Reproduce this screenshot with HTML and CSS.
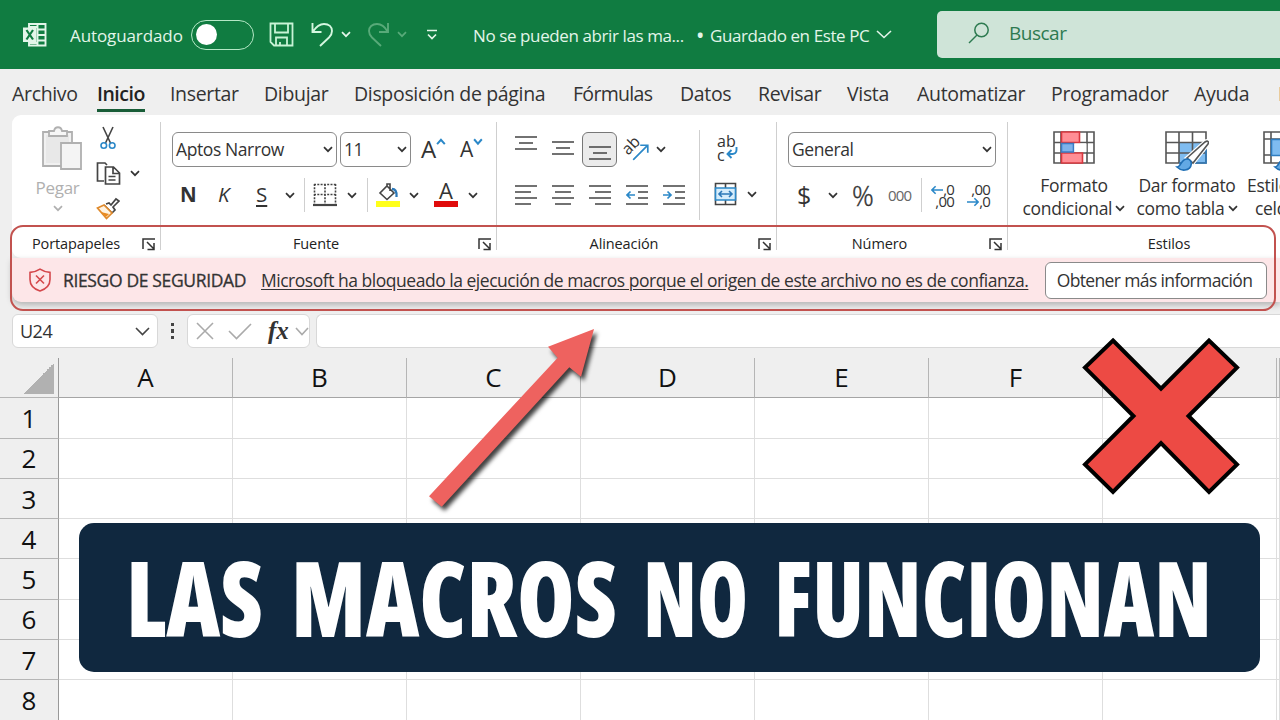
FILE: index.html
```html
<!DOCTYPE html>
<html lang="es">
<head>
  <meta charset="utf-8">
  <title>Las macros no funcionan</title>
  <link rel="stylesheet" href="styles.css">
</head>
<body>

  <!-- shared icons -->
  <svg class="defs">
    <symbol id="chev" viewBox="0 0 10 7"><path d="M1 1.2l4 4 4-4" fill="none" stroke="currentColor" stroke-width="1.7"/></symbol>
    <symbol id="launch" viewBox="0 0 14 13"><path d="M1 11V1h12M5 4l6.500 6.500M12 5v6.500H5.500" fill="none" stroke="#333" stroke-width="1.500"/></symbol>
  </svg>

  <header class="titlebar">
    <svg width="25" height="24" viewBox="0 0 25 24" fill="none" stroke="#e3f5e9" stroke-width="1.900"><path d="M6 5V1h16.500v21.500H6V19M14.500 1v22M14 6.500h9M14 12h9M14 17.500h9M6 4h8M6 20h8"/><path d="M0 4.500h13.500v14.500H0z" fill="#e3f5e9" stroke="none"/><path d="M3.500 7l6.500 9.500M10 7L3.500 16.500" stroke="#107c41" stroke-width="2.200"/></svg>
    <span class="autosave">Autoguardado</span>
    <span class="toggle"></span>
    <svg width="25" height="25" viewBox="0 0 25 25" fill="none" stroke="#c8f3d6" stroke-width="1.800"><path d="M1.500 1.500h22v22H5l-3.500-3.500zM6 1.500v9h13v-9M7 23.500v-8h11v8M11 20v3"/></svg>
    <svg width="23" height="25" viewBox="0 0 23 25" fill="none" stroke="#d5f7e0" stroke-width="1.900"><path d="M1.500 1v9h9M2 9.500C5 5 9 2 13 2c5 0 8 3 8 7 0 3-1 4.500-3 6.500L9 24"/></svg>
    <svg class="chev"><use href="#chev"/></svg>
    <svg class="dim" width="23" height="25" viewBox="0 0 23 25" fill="none" stroke="#58aa79" stroke-width="1.900"><path d="M21 1v9h-9M20.500 9.500C18 5 14 2 10 2 5 2 2 5 2 9c0 3 1 4.500 3 6.500L14 24"/></svg>
    <svg class="chev dim"><use href="#chev"/></svg>
    <svg width="12" height="12" viewBox="0 0 12 12" fill="none" stroke="#e3f5e9" stroke-width="1.700"><path d="M1 1.500h10M2 5.500l4 4 4-4"/></svg>
    <span class="filename">No se pueden abrir las ma...</span>
    <span class="saved"><b>•</b>Guardado en Este PC</span>
    <svg width="16" height="9" viewBox="0 0 16 9" fill="none" stroke="#e3f5e9" stroke-width="1.600"><path d="M1 1l7 6.500L15 1"/></svg>
    <div class="search">
      <svg width="22" height="22" viewBox="0 0 22 22" fill="none" stroke="#2d7a50" stroke-width="1.500"><circle cx="13.500" cy="8" r="6.700"/><path d="M9 13l-8 8"/></svg>
      <span>Buscar</span>
    </div>
  </header>

  <nav class="tabs">
    <span>Archivo</span>
    <span class="active">Inicio</span>
    <span>Insertar</span>
    <span>Dibujar</span>
    <span>Disposición de página</span>
    <span class="tight">Fórmulas</span>
    <span>Datos</span>
    <span>Revisar</span>
    <span>Vista</span>
    <span>Automatizar</span>
    <span>Programador</span>
    <span>Ayuda</span>
    <span>P</span>
  </nav>

  <main class="ribbon">
    <section class="group clipboard">
      <div class="clip-body">
        <div class="paste">
          <svg width="41" height="45" viewBox="0 0 41 45" fill="#f1f1f1" stroke="#b0b0b0" stroke-width="1.800"><path d="M2 6h29v34H2z"/><path d="M5 9h23v28H5z" stroke="none" fill="#e8e8e8"/><path d="M8 10V5h5c1-5 7-5 8 0h5v5z" fill="#f6f6f6"/><path d="M20 17h20v26H20z" fill="#f4f4f4"/></svg>
          <span>Pegar</span>
          <svg class="chev"><use href="#chev"/></svg>
        </div>
        <div class="clip-tools">
          <svg width="16" height="24" viewBox="0 0 16 24" fill="none" stroke-width="1.600"><path d="M3 1l7.500 16M13 1L5.500 17" stroke="#444"/><circle cx="3.800" cy="19.500" r="2.800" stroke="#2b88c8"/><circle cx="12.200" cy="19.500" r="2.800" stroke="#2b88c8"/></svg>
          <div class="copy">
            <svg width="25" height="25" viewBox="0 0 25 25" fill="none" stroke="#444" stroke-width="1.700"><path d="M8 20H1.500V2H9l2 2M9.500 6h8l6 6v11h-14zM17 6v6.500h6M12.500 15.500h7M12.500 19h7"/></svg>
            <svg class="chev"><use href="#chev"/></svg>
          </div>
          <svg width="24" height="23" viewBox="0 0 24 23" fill="none" stroke-width="1.700"><path d="M8 8l8 8M10 7l3-1 2 2 5-6 3 2-6 6 2 3-3 3" stroke="#444"/><path d="M8 8L1.500 11l9 10.500L16 16z" stroke="#e08a2c" fill="#fff3e2"/><path d="M5 15l8 2-3 3z" fill="#e98a20"/></svg>
        </div>
      </div>
      <div class="label"><span>Portapapeles</span><svg class="launch"><use href="#launch"/></svg></div>
    </section>

    <section class="group font">
      <div class="row row-top">
        <div class="select">Aptos Narrow<svg class="chev"><use href="#chev"/></svg></div>
        <div class="select">11<svg class="chev"><use href="#chev"/></svg></div>
        <span class="grow">A<svg class="hint" viewBox="0 0 10 7"><path d="M1 5.500l3.500-4 3.500 4" fill="none" stroke="#2b88c8" stroke-width="1.800"/></svg></span>
        <span class="grow small">A<svg class="hint" viewBox="0 0 10 7"><path d="M1 1l3.500 4L8 1" fill="none" stroke="#2b88c8" stroke-width="1.800"/></svg></span>
      </div>
      <div class="row row-bottom">
        <b>N</b>
        <i>K</i>
        <u>S</u>
        <svg class="chev"><use href="#chev"/></svg>
        <span class="sep"></span>
        <svg width="24" height="24" viewBox="0 0 24 24" stroke="#444" stroke-width="1.600"><path d="M1.500 1v20M12 1v20M22.500 1v20M1 1.500h22M1 11.500h22" stroke-dasharray="2 1.300"/><path d="M0 22h24" stroke-width="2.200"/></svg>
        <svg class="chev"><use href="#chev"/></svg>
        <span class="sep"></span>
        <svg width="24" height="24" viewBox="0 0 24 24" fill="none" stroke="#444" stroke-width="1.600"><path d="M11 3l7 7-7 6.500L4 10zM11 3V1h3v7"/><path d="M16 6c3 0 5 2 4.500 8" stroke="#2b78b8" stroke-width="2.300"/><path d="M0 21h24" stroke="#ffff1a" stroke-width="6"/></svg>
        <svg class="chev"><use href="#chev"/></svg>
        <span class="fontcolor">A</span>
        <svg class="chev"><use href="#chev"/></svg>
      </div>
      <div class="label"><span>Fuente</span><svg class="launch"><use href="#launch"/></svg></div>
    </section>

    <section class="group align">
      <div class="align-body">
        <div>
          <div class="row row-top">
            <svg class="ico up" viewBox="0 0 22 22"><path d="M0 3h22M4 9h14M0 15h22"/></svg>
            <svg class="ico" viewBox="0 0 22 22"><path d="M0 4h22M4 10h14M0 16h22"/></svg>
            <span class="pressed"><svg class="ico" viewBox="0 0 22 22"><path d="M0 9h22M4 15h14M0 21h22"/></svg></span>
            <span class="orient">ab<svg viewBox="0 0 18 18"><path d="M1 17L16 2M8.500 1.500H16.500V9.500" fill="none" stroke="#2b88c8" stroke-width="1.800"/></svg></span>
            <svg class="chev"><use href="#chev"/></svg>
          </div>
          <div class="row row-bottom">
            <svg class="ico" viewBox="0 0 22 22"><path d="M0 2h22M0 8h16M0 14h22M0 20h16"/></svg>
            <svg class="ico" viewBox="0 0 22 22"><path d="M0 2h22M3 8h16M0 14h22M3 20h16"/></svg>
            <svg class="ico" viewBox="0 0 22 22"><path d="M0 2h22M6 8h16M0 14h22M6 20h16"/></svg>
            <svg class="ico" viewBox="0 0 22 22"><path d="M0 2h22M12 8h10M12 14h10M0 20h22"/><path class="blue" d="M9 11H1M4.500 7.500L1 11l3.500 3.500"/></svg>
            <svg class="ico" viewBox="0 0 22 22"><path d="M0 2h22M12 8h10M12 14h10M0 20h22"/><path class="blue" d="M0 11h8M4.500 7.500L8 11l-3.500 3.500"/></svg>
          </div>
        </div>
        <div class="wrap-tools">
          <div class="wraptext"><span>ab</span><span>c</span><svg viewBox="0 0 12 12"><path d="M10.500 0v3c0 3-2 4-4 4H1.500M5.500 3l-4 4 4 4" fill="none" stroke="#2b88c8" stroke-width="1.900"/></svg></div>
          <div class="merge">
            <svg width="24" height="24" viewBox="0 0 24 24" fill="none" stroke="#444" stroke-width="1.600"><path d="M1.500 1.500h20v21h-20zM11.500 1v5M11.500 18v5"/><path d="M1.500 6h20v12h-20z" fill="#d6edfb" stroke="#2b88c8"/><path d="M5 12h13M8 9l-3 3 3 3M15 9l3 3-3 3" stroke="#2b78b8"/></svg>
            <svg class="chev"><use href="#chev"/></svg>
          </div>
        </div>
      </div>
      <div class="label"><span>Alineación</span><svg class="launch"><use href="#launch"/></svg></div>
    </section>

    <section class="group number">
      <div class="row row-top">
        <div class="select">General<svg class="chev"><use href="#chev"/></svg></div>
      </div>
      <div class="row row-bottom">
        <span class="dollar">$</span>
        <svg class="chev"><use href="#chev"/></svg>
        <span class="percent">%</span>
        <span class="thousands">000</span>
        <span class="sep"></span>
        <div class="decimals"><span><svg viewBox="0 0 13 10"><path d="M13 5H1M5 1L1 5l4 4"/></svg>,0</span><span>,00</span></div>
        <div class="decimals"><span>,00</span><span><svg viewBox="0 0 13 10"><path d="M0 5h12M8 1l4 4-4 4"/></svg>,0</span></div>
      </div>
      <div class="label"><span>Número</span><svg class="launch"><use href="#launch"/></svg></div>
    </section>

    <section class="group styles">
      <div class="styles-body">
        <div class="big">
          <svg width="42" height="40" viewBox="0 0 42 40" fill="none" stroke="#555" stroke-width="1.600"><path d="M1 1h40v31H1zM8 1v31M34 1v31M1 11.500h40M1 22h40"/><path d="M8.500 1h18v10.500h-18zM8.500 22h21v10h-21z" fill="#ff8e95" stroke="#d9383f"/><path d="M8.500 12.500h12v8.500h-12z" fill="#7fb2ea" stroke="#3b7cc4"/><path d="M21.500 12.500h12v8.500h-12z" fill="#fff" stroke="none"/></svg>
          <span>Formato</span>
          <span>condicional <svg class="chev"><use href="#chev"/></svg></span>
        </div>
        <div class="big table">
          <svg width="44" height="40" viewBox="0 0 44 40" fill="none" stroke="#555" stroke-width="1.600"><path d="M14 11h27v21H14z" fill="#7fbcf0" stroke="none"/><path d="M1 1h40v31H1zM14 1v31M27.500 1v31M1 11.500h40M1 22h40"/><path d="M14 32h27V11.500" stroke="#2f7dc0"/><path d="M22 27L40 11c3-2 4 0 3 2L28 32z" fill="#fff" stroke="#fff" stroke-width="4"/><path d="M22 27L40 11c3-2 4 0 3 2L28 32z" fill="#fff"/><path d="M12 36c4 0 4-8 10-8s6 10-2 11c-3 .500-6-1-8-3z" fill="#62a9e4" stroke="#1f6fb5"/></svg>
          <span>Dar formato</span>
          <span>como tabla <svg class="chev"><use href="#chev"/></svg></span>
        </div>
        <div class="big cells">
          <svg width="44" height="40" viewBox="0 0 44 40" fill="none" stroke="#555" stroke-width="1.600"><path d="M1 1h40v31H1zM8 1v31M1 8h40M1 24h40"/><path d="M8.500 8.500h28v16h-28z" fill="#7fbcf0" stroke="#2f7dc0"/><path d="M12 36c4 0 4-8 10-8s6 10-2 11c-3 .500-6-1-8-3z" fill="#62a9e4" stroke="#1f6fb5"/></svg>
          <span>Estilos de</span>
          <span>celda</span>
        </div>
      </div>
      <div class="label"><span>Estilos</span></div>
    </section>
  </main>

  <div class="warning">
    <svg width="22" height="24" viewBox="0 0 22 24" fill="none" stroke="#d4484c" stroke-width="1.600"><path d="M11 1.200c3 2 6 3 10 3.200v7c0 6-4 9.500-10 11.500C5 21 1 17.500 1 11.400v-7c4-.200 7-1.200 10-3.200zM7 7.500l8 8M15 7.500l-8 8"/></svg>
    <strong>RIESGO DE SEGURIDAD</strong>
    <u>Microsoft ha bloqueado la ejecución de macros porque el origen de este archivo no es de confianza.</u>
    <button>Obtener más información</button>
  </div>

  <div class="formulabar">
    <div class="namebox">U24<svg width="15" height="9" viewBox="0 0 15 9"><path d="M1 1l6.500 6.500L14 1" fill="none" stroke="#444" stroke-width="1.600"/></svg></div>
    <span class="dots"><i></i><i></i><i></i></span>
    <div class="fx">
      <svg width="18" height="18" viewBox="0 0 18 18"><path d="M1 1l16 16M17 1L1 17"/></svg>
      <svg width="24" height="17" viewBox="0 0 24 17"><path d="M1 8l7.500 7.500L23 1"/></svg>
      <em>fx</em>
      <svg width="14" height="9" viewBox="0 0 14 9"><path d="M1 1l6 6.500L13 1"/></svg>
    </div>
    <div class="formula"></div>
  </div>

  <table class="sheet">
    <tr class="cols"><th class="corner"></th><th>A</th><th>B</th><th>C</th><th>D</th><th>E</th><th>F</th><th></th><th></th></tr>
    <tr><th>1</th><td></td><td></td><td></td><td></td><td></td><td></td><td></td><td></td></tr>
    <tr><th>2</th><td></td><td></td><td></td><td></td><td></td><td></td><td></td><td></td></tr>
    <tr><th>3</th><td></td><td></td><td></td><td></td><td></td><td></td><td></td><td></td></tr>
    <tr><th>4</th><td></td><td></td><td></td><td></td><td></td><td></td><td></td><td></td></tr>
    <tr><th>5</th><td></td><td></td><td></td><td></td><td></td><td></td><td></td><td></td></tr>
    <tr><th>6</th><td></td><td></td><td></td><td></td><td></td><td></td><td></td><td></td></tr>
    <tr><th>7</th><td></td><td></td><td></td><td></td><td></td><td></td><td></td><td></td></tr>
    <tr><th>8</th><td></td><td></td><td></td><td></td><td></td><td></td><td></td><td></td></tr>
  </table>

  <!-- annotations over the sheet -->
  <div class="frame"></div>
  <svg class="marks" viewBox="0 0 1280 720">
    <polygon class="arrow" points="594,329 548,346.700 557.700,357.700 429,496.300 441.700,506.700 569.300,367.300 581,376.700"/>
    <polygon class="cross" points="1113,340.500 1161,388.600 1209,340.500 1237,367.600 1188.500,416 1237,464.400 1209,492 1161,443.200 1113,492 1085,464.400 1133.500,416 1085,367.600"/>
  </svg>
  <div class="banner">
    <svg width="1181" height="149">
      <text x="47" y="114" textLength="137" lengthAdjust="spacingAndGlyphs">LAS</text>
      <text x="212" y="114" textLength="326" lengthAdjust="spacingAndGlyphs">MACROS</text>
      <text x="564" y="114" textLength="105" lengthAdjust="spacingAndGlyphs">NO</text>
      <text x="695" y="114" textLength="438" lengthAdjust="spacingAndGlyphs">FUNCIONAN</text>
    </svg>
  </div>

</body>
</html>
```
FILE: styles.css
```css
* {
  box-sizing: border-box;
}

html {
  overflow: hidden;
}

body {
  margin: 0;
  width: 1280px;
  height: 720px;
  overflow: hidden;
  position: relative;
  background: #efefef;
  color: #333;
  font-family: "Open Sans", "Noto Sans", sans-serif;
  font-size: 17px;
  white-space: nowrap;
}

svg {
  display: block;
  flex: none;
}

.defs {
  display: none;
}

.chev {
  width: 10px;
  height: 7px;
}

/* title bar */
.titlebar {
  height: 69px;
  background: #107c41;
  color: #e3f5e9;
  display: grid;
  grid-template-columns: 47px 121px 78px 42px 30px 26px 30px 29px 47px 226px 177px 61px 1fr;
  align-items: center;
  padding-left: 23px;
  font-size: 17px;
}

.titlebar .dim {
  color: #58aa79;
}

.autosave {
  letter-spacing: -0.1px;
}

.toggle {
  width: 63px;
  height: 30px;
  border: 1.5px solid #b5e8c6;
  border-radius: 15px;
}

.toggle::before {
  content: "";
  display: block;
  width: 21px;
  height: 21px;
  margin: 3px 4px;
  border-radius: 50%;
  background: #fff;
}

.filename, .saved {
  letter-spacing: -0.4px;
}

.autosave, .filename, .saved {
  padding-top: 1px;
}

.saved b {
  display: inline-block;
  width: 13px;
  margin-left: -2px;
}

.search {
  height: 47px;
  display: flex;
  align-items: center;
  gap: 19px;
  padding-left: 31px;
  padding-bottom: 3px;
  background: #cfe4d8;
  border-radius: 5px 0 0 5px;
  color: #2d7a50;
  font-size: 19px;
  letter-spacing: -0.5px;
}

/* ribbon tabs */
.tabs {
  height: 46px;
  display: grid;
  grid-template-columns: 85px 73px 94px 90px 219px 107px 78px 89px 70px 134px 143px 84px 4px;
  padding: 11px 0 0 12px;
  justify-items: start;
  font-size: 19.5px;
  line-height: 28px;
  letter-spacing: -0.33px;
}

.tabs .active {
  height: 32px;
  font-weight: 600;
  letter-spacing: -0.5px;
  color: #222;
  border-bottom: 3px solid #185c37;
}

.tabs .tight {
  letter-spacing: -0.7px;
}

/* ribbon */
.ribbon {
  height: 143px;
  margin-left: 12px;
  padding-top: 7px;
  display: grid;
  grid-template-columns: 149px 336px 280px 231px 1fr;
  background: #fff;
  border-radius: 9px 0 0 9px;
}

.group {
  height: 128px;
  padding-top: 6px;
  border-right: 1px solid #cfcfcf;
}

.group.styles {
  min-width: 0;
  border-right: none;
}

.row {
  display: grid;
  align-items: center;
  justify-items: start;
}

.row-top {
  height: 42px;
}

.row-bottom {
  height: 50px;
}

.label {
  height: 20px;
  margin-top: 14px;
  display: flex;
  align-items: center;
  font-size: 14.5px;
  line-height: 20px;
  letter-spacing: -0.1px;
  color: #222;
}

.label span {
  flex: 1;
  padding-right: 7px;
  text-align: center;
}

.launch {
  width: 14px;
  height: 13px;
  margin-right: 4px;
}

.select {
  width: 100%;
  height: 35px;
  padding: 0 3px 0 3px;
  display: flex;
  align-items: center;
  justify-content: space-between;
  border: 1.5px solid #8a8a8a;
  border-radius: 6px;
  font-size: 17.5px;
  letter-spacing: -0.4px;
}

.sep {
  width: 1px;
  height: 34px;
  background: #cfcfcf;
}

.clip-body {
  height: 92px;
  display: grid;
  grid-template-columns: 60px 1fr;
  padding-left: 24px;
}

.paste {
  width: 43px;
  display: flex;
  flex-direction: column;
  align-items: center;
  color: #b0b0b0;
  line-height: 33px;
  letter-spacing: -0.3px;
}

.paste > svg:first-child {
  margin: -2px 0 0 7px;
}

.paste .chev {
  margin-top: 1px;
}

.clip-tools {
  display: flex;
  flex-direction: column;
  justify-content: space-between;
  height: 94px;
  margin-top: -2px;
}

.clip-tools > svg:first-child {
  margin-left: 4px;
}

.copy {
  display: flex;
  align-items: center;
  gap: 9px;
}

.clipboard .label span {
  padding: 0;
  margin-left: -2px;
}

.font .row {
  padding-left: 11px;
}

.font .row-top {
  grid-template-columns: 165px 71px 38px 30px;
  column-gap: 3px;
}

.grow {
  padding-left: 7px;
  display: flex;
  font-size: 24px;
  line-height: 28px;
}

.grow.small {
  padding-left: 5px;
  font-size: 21px;
}

.hint {
  width: 11px;
  height: 8px;
  margin-top: 3px;
}

.font .row-bottom {
  grid-template-columns: 38px 38px 29px 19px 9px 34px 20px 9px 33px 25px 34px 20px;
  padding-left: 19px;
  font-size: 20.5px;
}

.font b, .font i, .font u {
  position: relative;
  top: -1px;
}

.font u {
  text-decoration-thickness: 1.5px;
  text-underline-offset: 3px;
}

.fontcolor {
  width: 24px;
  height: 24px;
  border-bottom: 6px solid #e00b0b;
  font-size: 22px;
  line-height: 15px;
  text-align: center;
}

.align-body {
  height: 92px;
  display: grid;
  grid-template-columns: 202px 1fr;
}

.align .row {
  grid-template-columns: 37px 37px 37px 37px 20px;
  padding-left: 18px;
}

.align .row-top {
  grid-template-columns: 37px 30px 43px 31px 20px;
}

.ico {
  width: 22px;
  height: 22px;
  fill: none;
  stroke: #444;
  stroke-width: 1.7;
}

.ico.up {
  margin-top: -8px;
}

.ico .blue {
  stroke: #2b88c8;
}

.pressed {
  width: 35px;
  height: 35px;
  padding: 5px 0 0 5.5px;
  border: 1.5px solid #777;
  border-radius: 6px;
  background: #ebebeb;
}

.orient {
  position: relative;
  font-size: 16px;
  line-height: 18px;
  transform: translate(-4px, -4px) rotate(-45deg);
}

.orient svg {
  position: absolute;
  left: 3px;
  top: 13px;
  width: 17px;
  height: 17px;
  transform: rotate(45deg);
}

.wrap-tools {
  height: 90px;
  margin-top: 2px;
  padding: 4px 0 0 14px;
  border-left: 1px solid #cfcfcf;
}

.wraptext {
  width: 24px;
  height: 30px;
  margin-left: 3px;
  position: relative;
  font-size: 16px;
  line-height: 14px;
}

.wraptext span {
  display: block;
}

.wraptext svg {
  position: absolute;
  left: 9px;
  top: 13px;
  width: 12px;
  height: 12px;
}

.merge {
  display: flex;
  align-items: center;
  gap: 9px;
  margin-top: 18px;
}

.number .row {
  padding-left: 11px;
}

.number .row-top {
  grid-template-columns: 208px;
}

.number .row-bottom {
  grid-template-columns: 31px 24px 38px 31px 9px 36px 30px;
  padding-left: 20px;
}

.dollar {
  font-size: 25px;
}

.percent {
  font-size: 27px;
  font-weight: 300;
  -webkit-text-stroke: 0.4px #333;
}

.thousands {
  font-size: 15px;
  letter-spacing: -0.8px;
  margin-left: -2px;
  color: #666;
}

.decimals {
  width: 24px;
  font-size: 15px;
  line-height: 12px;
  letter-spacing: -0.8px;
  text-align: right;
}

.decimals span {
  display: block;
}

.decimals svg {
  display: inline-block;
  width: 12px;
  height: 10px;
  fill: none;
  stroke: #2b88c8;
  stroke-width: 1.7;
}

.styles-body {
  height: 92px;
  display: grid;
  grid-template-columns: 132px 94px 46px;
  padding-top: 2px;
}

.big {
  display: flex;
  flex-direction: column;
  align-items: center;
  font-size: 17.5px;
  line-height: 23px;
  letter-spacing: -0.3px;
}

.big > svg {
  height: 40px;
  margin: 1px 0 3px;
}

.big span .chev {
  display: inline-block;
  vertical-align: 3px;
  margin-left: -1px;
}

.big.cells {
  align-items: flex-start;
  padding-left: 13px;
}

.big.cells svg {
  margin-left: 16px;
}

.big.cells span:last-child {
  padding-left: 8px;
}

.styles .label span {
  padding: 0 0 0 50px;
}

/* message bar */
.warning {
  height: 44px;
  margin-left: 12px;
  padding: 0 13px 0 17px;
  display: grid;
  grid-template-columns: 34px 198px 784px 222px;
  align-items: center;
  background: #fde6e8;
  border-radius: 0 0 0 9px;
  box-shadow: 0 3px 6px rgba(0, 0, 0, 0.25);
}

.warning strong {
  font-weight: 500;
  font-size: 17.5px;
  letter-spacing: -0.35px;
  -webkit-text-stroke: 0.3px #333;
}

.warning u {
  font-size: 17.5px;
  letter-spacing: -0.475px;
  text-underline-offset: 2px;
}

.warning button {
  height: 37px;
  padding: 0 3px 0 0;
  border: 1.5px solid #8a8a8a;
  border-radius: 6px;
  background: #fff;
  color: #333;
  font: 17.5px "Open Sans", "Noto Sans", sans-serif;
  letter-spacing: -0.63px;
}

/* formula bar */
.formulabar {
  height: 56px;
  padding: 12px 0 10px 12px;
  display: grid;
  grid-template-columns: 146px 29px 123px 6px 1fr;
}

.namebox, .fx, .formula {
  height: 34px;
  display: flex;
  align-items: center;
  background: #fff;
  border: 1px solid #d8d8d8;
  border-radius: 6px;
}

.namebox {
  justify-content: space-between;
  padding: 0 7px;
  font-size: 18px;
  letter-spacing: -0.5px;
}

.dots {
  display: flex;
  flex-direction: column;
  align-items: center;
  justify-content: center;
  gap: 3px;
}

.dots i {
  width: 3.5px;
  height: 3.5px;
  background: #444;
}

.fx {
  padding: 0 2px 0 8px;
  gap: 14px;
  fill: none;
  stroke: #aaa;
  stroke-width: 1.6;
}

.fx em {
  width: 22px;
  margin: 0 -8px 0 2px;
  font: italic bold 25px/26px "Liberation Serif", serif;
}

.formula {
  grid-column: 5;
  border-right: none;
  border-radius: 6px 0 0 6px;
}

/* grid */
.sheet {
  width: 1280px;
  border-collapse: separate;
  border-spacing: 0;
  table-layout: fixed;
  background: #fff;
}

.sheet tr {
  height: 40.3px;
}

.sheet th {
  width: 174px;
  padding: 0;
  background: #efefef;
  font-size: 26px;
  line-height: 34px;
  font-weight: 400;
  color: #111;
  border-right: 1px solid #b5b5b5;
  border-bottom: 1px solid #a5a5a5;
}

.sheet .cols th {
  padding-bottom: 2px;
}

.sheet .cols th:last-child {
  width: auto;
}

.sheet th:first-child {
  width: 59px;
  border-bottom-color: #b5b5b5;
  border-right-color: #999;
}

.sheet .corner::before {
  content: "";
  display: block;
  width: 31px;
  height: 31px;
  margin: 4px 0 0 23px;
  background: linear-gradient(135deg, transparent 50%, #b1b1b1 50%);
}

.sheet td {
  padding: 0;
  border-right: 1px solid #dedede;
  border-bottom: 1px solid #dedede;
}

/* annotations */
.frame {
  position: absolute;
  left: 10px;
  top: 225px;
  width: 1266px;
  height: 86px;
  border: 2px solid #c2524f;
  border-radius: 13px;
}

.marks {
  position: absolute;
  left: 0;
  top: 0;
  width: 1280px;
  height: 720px;
}

.arrow {
  fill: #ee625f;
  filter: drop-shadow(3px 4px 2px rgba(0, 0, 0, 0.75));
}

.cross {
  fill: #ed4a44;
  stroke: #000;
  stroke-width: 4;
}

.banner {
  position: absolute;
  left: 79px;
  top: 523px;
  width: 1181px;
  height: 149px;
  background: #10283f;
  border-radius: 15px;
}

.banner text {
  font-family: "Open Sans", sans-serif;
  font-size: 105px;
  font-weight: 800;
  font-stretch: 75%;
  fill: #fff;
}
```
